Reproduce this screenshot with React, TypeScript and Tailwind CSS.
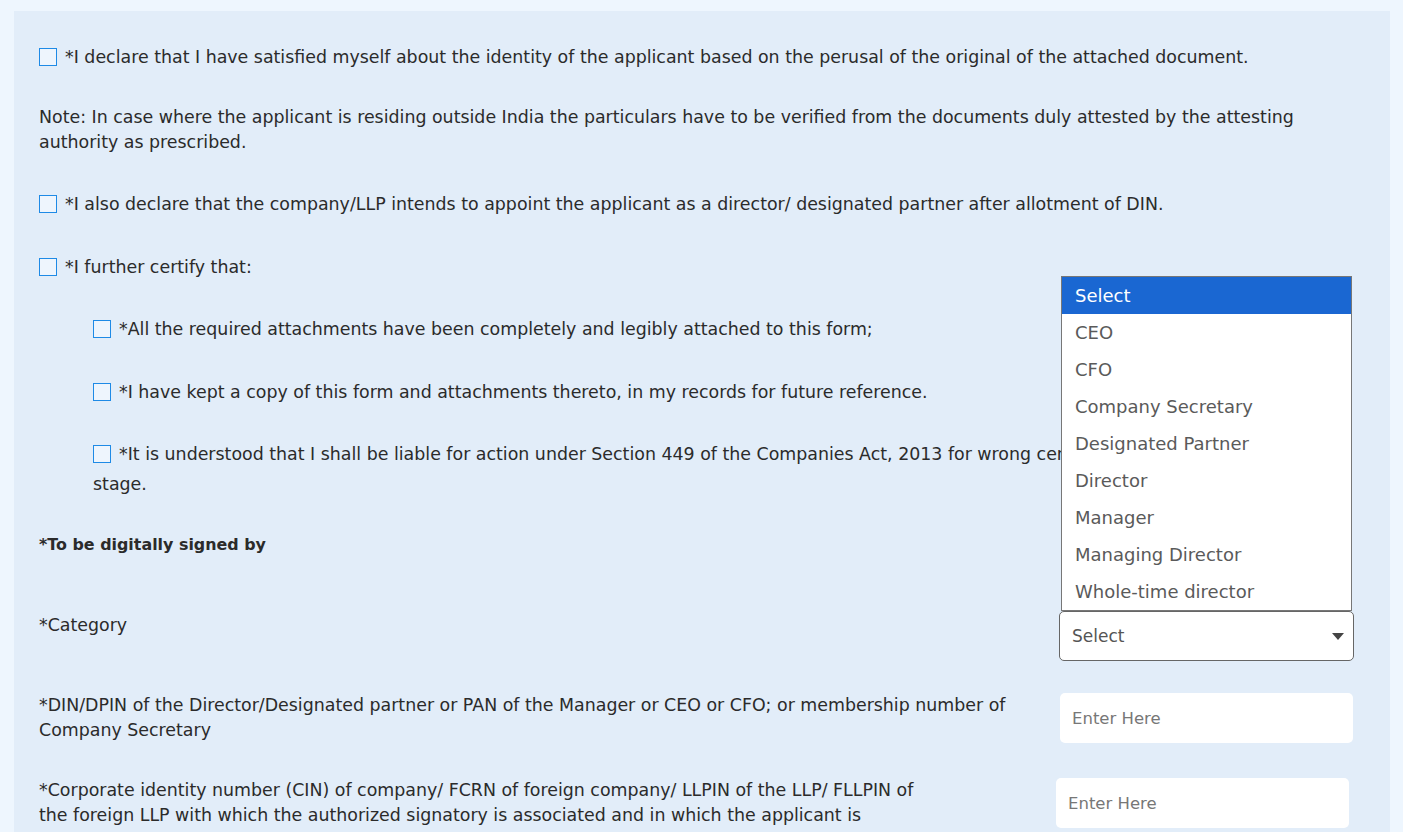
import React from "react";

const font = { fontFamily: '"DejaVu Sans", "Open Sans", sans-serif' };

function Box() {
  return (
    <span className="inline-block w-[18px] h-[18px] border-[1.5px] border-[#1e8ae6] bg-[#eef5fd] align-[-3px] mr-[8px]" />
  );
}

const options = [
  "CEO",
  "CFO",
  "Company Secretary",
  "Designated Partner",
  "Director",
  "Manager",
  "Managing Director",
  "Whole-time director",
];

export default function App() {
  return (
    <div style={font} className="bg-[#eef6fe] pt-[11px] pl-[14px] pr-[13px] overflow-hidden h-[832px]">
      <div className="bg-[#e2edf9] pl-[25px] pr-[37px] pt-[34px] pb-[40px] text-[17.4px] leading-[25px] text-[#2b2b2b]">
        {/* Declarations */}
        <p className="mb-[35px]">
          <Box />
          *I declare that I have satisfied myself about the identity of the applicant based on the perusal of the original of the attached document.
        </p>
        <p className="mb-[37px]">
          Note: In case where the applicant is residing outside India the particulars have to be verified from the documents duly attested by the attesting authority as prescribed.
        </p>
        <p className="mb-[38px]">
          <Box />
          *I also declare that the company/LLP intends to appoint the applicant as a director/ designated partner after allotment of DIN.
        </p>
        <p className="mb-[37px]">
          <Box />
          *I further certify that:
        </p>
        <div className="pl-[54px]">
          <p className="mb-[38px]">
            <Box />
            *All the required attachments have been completely and legibly attached to this form;
          </p>
          <p className="mb-[37px]">
            <Box />
            *I have kept a copy of this form and attachments thereto, in my records for future reference.
          </p>
          <div className="mb-[35px]">
            <p>
              <Box />
              *It is understood that I shall be liable for action under Section 449 of the Companies Act, 2013 for wrong certification, if any found at any
            </p>
            <p className="mt-[5px]">stage.</p>
          </div>
        </div>

        <p className="font-bold text-[15.9px] mb-[56px]">*To be digitally signed by</p>

        {/* Category */}
        <div className="flex justify-between items-start mb-[32px]">
          <p>*Category</p>
          <div className="relative w-[295px] mr-[-1px] mt-[-2px]">
            <ul className="absolute bottom-full left-[2px] w-[291px] bg-white border border-[#777] text-[18px] text-[#5a5a5a] z-10">
              <li className="h-[37px] pl-[13px] flex items-center bg-[#1a67d2] text-white">Select</li>
              {options.map((o) => (
                <li key={o} className="h-[37px] pl-[13px] flex items-center">
                  {o}
                </li>
              ))}
            </ul>
            <div className="h-[50px] bg-white border border-[#666] rounded-[5px] flex items-center justify-between pl-[12px] pr-[9px] text-[17px] text-[#555]">
              <span>Select</span>
              <svg width="12" height="7" viewBox="0 0 12 7">
                <path d="M0 0h12L6 7z" fill="#444" />
              </svg>
            </div>
          </div>
        </div>

        {/* DIN */}
        <div className="flex justify-between items-start mb-[35px]">
          <p>
            *DIN/DPIN of the Director/Designated partner or PAN of the Manager or CEO or CFO; or membership number of
            <br />
            Company Secretary
          </p>
          <div className="w-[293px] h-[50px] shrink-0 bg-white rounded-[5px] flex items-center pl-[12px] text-[16.5px] text-[#777]">
            Enter Here
          </div>
        </div>

        {/* CIN */}
        <div className="flex justify-between items-start">
          <p>
            *Corporate identity number (CIN) of company/ FCRN of foreign company/ LLPIN of the LLP/ FLLPIN of
            <br />
            the foreign LLP with which the authorized signatory is associated and in which the applicant is
            <br />
            proposed to be appointed/ appointed
          </p>
          <div className="w-[293px] h-[50px] shrink-0 bg-white rounded-[5px] flex items-center pl-[12px] text-[16.5px] text-[#777] mr-[4px]">
            Enter Here
          </div>
        </div>
      </div>
    </div>
  );
}
